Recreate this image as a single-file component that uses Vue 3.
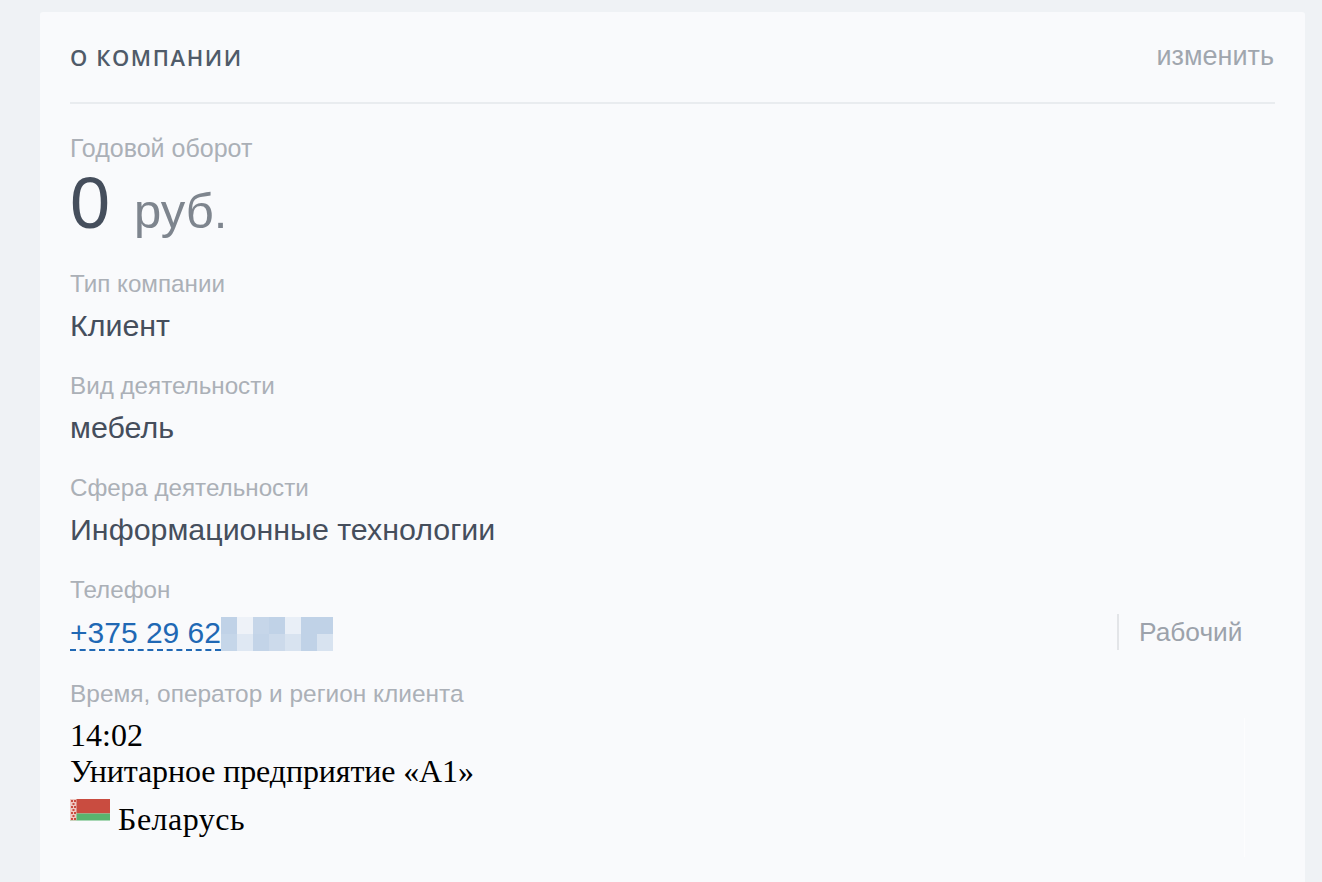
<script setup>
const mosaic = [
  '#c0d2e7', '#eef2f8', '#c6d6e9', '#c0d2e7', '#e9eff7', '#c0d2e7', '#c0d2e7',
  '#c5d6e9', '#dfe8f3', '#c3d4e8', '#ccdaeb', '#d8e3f0', '#c0d2e7', '#d8e3f0',
]
const fields = [
  { label: 'Тип компании', value: 'Клиент' },
  { label: 'Вид деятельности', value: 'мебель' },
  { label: 'Сфера деятельности', value: 'Информационные технологии' },
]
</script>

<template>
  <main class="page">
    <section class="card">
      <header class="head">
        <h2 class="title">О КОМПАНИИ</h2>
        <a class="edit">изменить</a>
      </header>

      <div class="turnover">
        <div class="label">Годовой оборот</div>
        <div class="sum"><span class="num">0</span><span class="cur">руб.</span></div>
      </div>

      <div v-for="f in fields" :key="f.label" class="field">
        <div class="label">{{ f.label }}</div>
        <div class="value">{{ f.value }}</div>
      </div>

      <div class="phone-block">
        <div class="label">Телефон</div>
        <div class="phone-row">
          <div class="phone">
            <a class="tel">+375 29 62</a>
            <div class="mosaic">
              <i v-for="(c, i) in mosaic" :key="i" :style="{ background: c }"></i>
            </div>
          </div>
          <div class="kind">Рабочий</div>
        </div>
      </div>

      <div class="client-block">
        <div class="label wide">Время, оператор и регион клиента</div>
        <div class="client">
          <div class="client-text">
            <div>14:02</div>
            <div class="operator">Унитарное предприятие «А1»</div>
            <div class="region">
              <svg class="flag" width="40" height="22" viewBox="0 0 40 22">
                <rect x="0" y="0" width="40" height="14.5" fill="#c94c40" />
                <rect x="0" y="14.5" width="40" height="7" fill="#59b36e" />
                <rect x="0" y="0" width="6.5" height="21.5" fill="#eec9c3" />
                <g fill="#c94c40">
                  <rect x="1" y="1" width="2" height="2" /><rect x="4" y="1" width="2" height="2" />
                  <rect x="2.5" y="4" width="2" height="2" /><rect x="1" y="7" width="2" height="2" />
                  <rect x="4" y="7" width="2" height="2" /><rect x="2.5" y="10" width="2" height="2" />
                  <rect x="1" y="13" width="2" height="2" /><rect x="4" y="13" width="2" height="2" />
                  <rect x="2.5" y="16" width="2" height="2" /><rect x="1" y="19" width="2" height="2" />
                  <rect x="4" y="19" width="2" height="2" />
                </g>
              </svg>
              <span>Беларусь</span>
            </div>
          </div>
        </div>
      </div>
    </section>
  </main>
</template>

<style>
html, body { margin: 0; height: 100%; overflow: hidden; background: #eff2f5; }
</style>

<style scoped>
.page {
  height: 882px;
  padding: 12px 17px 0 40px;
  box-sizing: border-box;
  background: #eff2f5;
  overflow: hidden;
  font-family: "Liberation Sans", Arial, sans-serif;
}
.card {
  height: 870px;
  box-sizing: border-box;
  padding: 0 30px;
  background: #f9fafc;
  border-radius: 3px 3px 0 0;
}
.head {
  height: 92px;
  box-sizing: border-box;
  display: flex;
  justify-content: space-between;
  align-items: center;
  border-bottom: 2px solid #e9ecef;
}
.title {
  margin: 0;
  font: 600 22px/26px "Open Sans", sans-serif;
  letter-spacing: 1.6px;
  color: #4f5b69;
}
.edit { font-size: 27px; line-height: 30px; color: #a0a6ae; margin: -3px 1px 0 0; }
.label { font-size: 24.2px; line-height: 26px; color: #abb0b7; }
.label.wide { font-size: 24.45px; }
.turnover { padding-top: 31px; }
.turnover .label { font-size: 25px; }
.sum { display: flex; align-items: baseline; height: 110px; color: #454e5c; }
.num { font-size: 72px; line-height: 84px; width: 64px; }
.cur { font-size: 49px; line-height: 84px; color: #7e858e; }
.field { height: 102px; }
.value { font-size: 30.4px; line-height: 50px; margin-top: 3px; color: #454e5c; }
.phone-row {
  display: flex;
  justify-content: space-between;
  align-items: flex-start;
  height: 54px;
  padding-right: 33px;
}
.phone { display: flex; align-items: flex-start; }
.tel {
  font-size: 30px;
  line-height: 33px;
  margin-top: 13px;
  color: #2068b4;
  border-bottom: 2px dashed #2068b4;
}
.mosaic {
  display: grid;
  grid-template-columns: repeat(7, 16px);
  grid-template-rows: 17px 17px;
  margin-top: 14px;
  filter: blur(0.4px);
}
.mosaic i { display: block; }
.kind {
  width: 125px;
  height: 36px;
  margin-top: 11px;
  box-sizing: border-box;
  padding-left: 20px;
  border-left: 2px solid #e3e5e8;
  font-size: 26.3px;
  line-height: 36px;
  color: #9ca2ab;
}
.client-block { padding-top: 24px; }
.client {
  display: flow-root;
  margin-top: 11px;
  margin-right: 30px;
  height: 139px;
  border-right: 1px solid #fdfdfe;
}
.client-text {
  margin-top: -1px;
  font-family: "Liberation Serif", "Times New Roman", serif;
  font-size: 32px;
  line-height: 36px;
  color: #000;
}
.operator { letter-spacing: -0.12px; }
.region { display: flex; align-items: flex-start; height: 44px; }
.flag { margin-top: 10px; margin-right: 8px; flex: none; }
.region span { margin-top: 12px; letter-spacing: 0.5px; }
</style>
